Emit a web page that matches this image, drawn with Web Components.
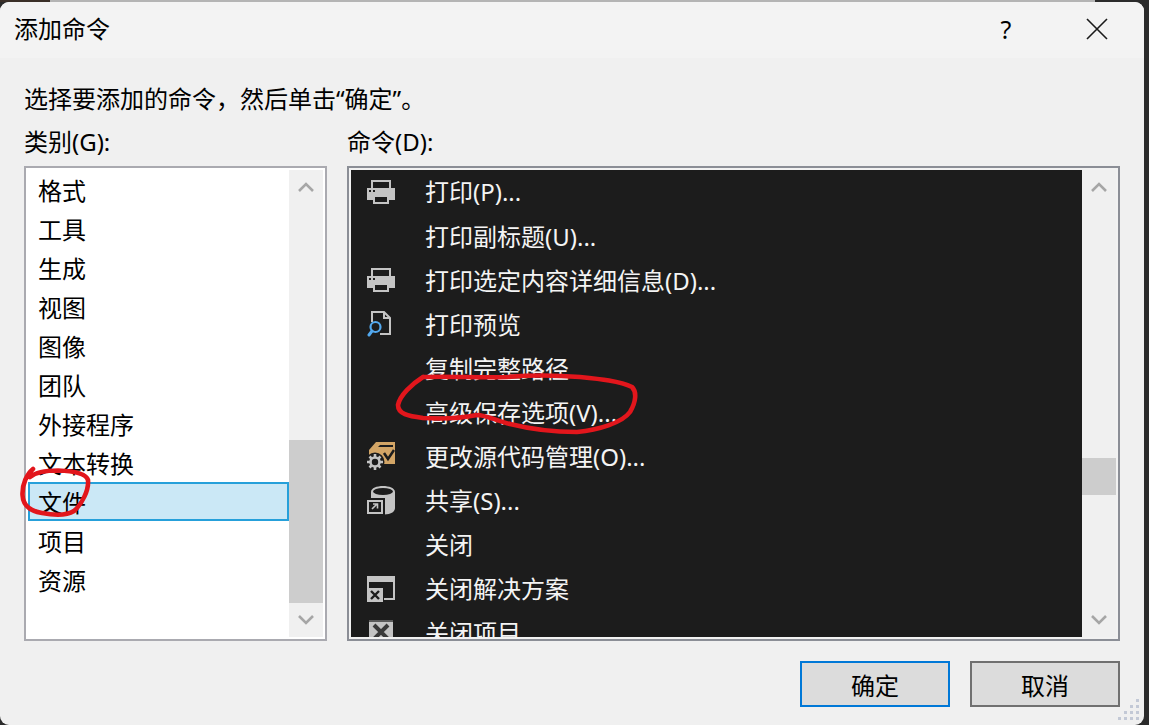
<!DOCTYPE html>
<html lang="zh">
<head>
<meta charset="utf-8">
<title>添加命令</title>
<style>
  html, body { margin: 0; height: 100%; overflow: hidden; }
  body {
    background: linear-gradient(90deg, #3a2f28 50px, #b4b4b4 50px 1095px, #2b2b2b 1095px) top / 100% 2px no-repeat, #2b2b2b;
    font: 24px/1.3 "Noto Sans", "Noto Sans CJK SC", sans-serif;
    color: #000;
  }
</style>
</head>
<body>
<cmd-dialog heading="添加命令">
  <span slot="prompt">选择要添加的命令，然后单击“确定”。</span>

  <div slot="left" class="col">
    <field-label>类别(G):</field-label>
    <list-box thumb-top="236" thumb-height="163">
      <cat-item>格式</cat-item>
      <cat-item>工具</cat-item>
      <cat-item>生成</cat-item>
      <cat-item>视图</cat-item>
      <cat-item>图像</cat-item>
      <cat-item>团队</cat-item>
      <cat-item>外接程序</cat-item>
      <cat-item>文本转换</cat-item>
      <cat-item selected>文件</cat-item>
      <cat-item>项目</cat-item>
      <cat-item>资源</cat-item>
    </list-box>
  </div>

  <div slot="right" class="col">
    <field-label>命令(D):</field-label>
    <list-box dark thumb-top="254" thumb-height="37">
      <cmd-item icon="printer">打印(P)...</cmd-item>
      <cmd-item>打印副标题(U)...</cmd-item>
      <cmd-item icon="printer">打印选定内容详细信息(D)...</cmd-item>
      <cmd-item icon="preview">打印预览</cmd-item>
      <cmd-item>复制完整路径</cmd-item>
      <cmd-item>高级保存选项(V)...</cmd-item>
      <cmd-item icon="source">更改源代码管理(O)...</cmd-item>
      <cmd-item icon="share">共享(S)...</cmd-item>
      <cmd-item>关闭</cmd-item>
      <cmd-item icon="closesln">关闭解决方案</cmd-item>
      <cmd-item icon="closeproj">关闭项目</cmd-item>
    </list-box>
  </div>

  <dlg-button slot="buttons" primary>确定</dlg-button>
  <dlg-button slot="buttons">取消</dlg-button>
</cmd-dialog>

<script>
const ICONS = {
  printer: `<svg width="28" height="24" viewBox="0 0 28 24">
    <path fill="#c4c4c4" d="M4 0h20v8h4v12h-6v4H6v-4H0V8h4z"/>
    <path fill="#1c1c1c" d="M6 2h16v6H6zM8 17h12v5H8zM2 10h2v2H2zM6 10h2v2H6z"/>
  </svg>`,
  preview: `<svg width="28" height="26" viewBox="0 0 28 26">
    <path fill="none" stroke="#c4c4c4" stroke-width="2" d="M5 11V1h12l6 6v16H13"/>
    <path fill="#c4c4c4" d="M16 1h2v5h5v2h-7z"/>
    <circle cx="8.500" cy="16" r="5" fill="#1c1c1c" stroke="#52a8ee" stroke-width="2.200"/>
    <path stroke="#52a8ee" stroke-width="3" stroke-linecap="round" d="M5 20l-3 4"/>
  </svg>`,
  source: `<svg width="28" height="30" viewBox="0 0 28 30">
    <path fill="#d3a566" d="M2 8l7-8h19v22H2z"/>
    <path fill="#1c1c1c" d="M11 5l2-2h13v2z"/>
    <path fill="none" stroke="#1c1c1c" stroke-width="2.500" d="M17 11l4 6 6-9"/>
    <circle cx="8" cy="20" r="9.500" fill="#1c1c1c"/>
    <circle cx="8" cy="20" r="4.500" fill="none" stroke="#c4c4c4" stroke-width="2.600"/>
    <path stroke="#c4c4c4" stroke-width="2.600" d="M8 12v3M8 25v3M0 20h3M13 20h3M2.500 14.500l2 2M11.500 23.500l2 2M13.500 14.500l-2 2M4.500 23.500l-2 2"/>
  </svg>`,
  share: `<svg width="28" height="30" viewBox="0 0 28 30">
    <path fill="#c4c4c4" d="M4 6c0-8 24-8 24 0v16c0 8-16 7-18 6V14H4z"/>
    <ellipse cx="16" cy="5.500" rx="10" ry="3.500" fill="#1c1c1c"/>
    <path fill="#1c1c1c" d="M0 12h18v18H0z"/>
    <path fill="#c4c4c4" d="M0 14h16v14H0z"/>
    <path fill="#1c1c1c" d="M2 16h12v10H2z"/>
    <path fill="none" stroke="#c4c4c4" stroke-width="1.600" d="M5 23l5-5M6 18h4.500v4.500"/>
  </svg>`,
  closesln: `<svg width="28" height="28" viewBox="0 0 28 28">
    <path fill="#c4c4c4" d="M0 1h28v24H17v-2h9V7H2v6H0z"/>
    <path fill="#c4c4c4" d="M0 13h16v14H0z"/>
    <path stroke="#1c1c1c" stroke-width="2.400" d="M4 16l8 8M12 16l-8 8"/>
  </svg>`,
  closeproj: `<svg width="24" height="26" viewBox="0 0 24 26">
    <path fill="#c4c4c4" d="M0 2h24v24H0z"/>
    <path fill="#5a5a5a" d="M0 0h24v2H0z"/>
    <path stroke="#3a3a3a" stroke-width="4" d="M5 5l14 14M19 5L5 19"/>
  </svg>`
};

class CmdDialog extends HTMLElement {
  constructor() {
    super();
    this.attachShadow({mode: 'open'});
  }
  connectedCallback() {
    this.shadowRoot.innerHTML = `
      <style>
        :host {
          display: flex;
          flex-direction: column;
          position: relative;
          width: 1144px;
          height: 723px;
          margin-top: 2px;
          box-sizing: border-box;
          background: #f0f0f0;
          border-radius: 9px;
          overflow: hidden;
        }
        .title {
          display: flex;
          align-items: center;
          height: 56px;
          flex: none;
          background: #f3f3f3;
          padding: 0 0 2px 14px;
          box-sizing: border-box;
        }
        .title span { flex: 1; }
        .help { width: 66px; text-align: center; font-size: 25px; margin-right: 25px; }
        .close { width: 66px; display: flex; justify-content: center; margin-right: 14px; }
        .body {
          flex: 1;
          display: flex;
          flex-direction: column;
          padding: 24px 24px 18px;
        }
        .prompt { height: 34px; line-height: 34px; }
        .lists {
          display: grid;
          grid-template-columns: 303px 773px;
          gap: 20px;
          margin-top: 10px;
        }
        .buttons {
          display: flex;
          justify-content: flex-end;
          gap: 20px;
          margin-top: 20px;
        }
        .marks {
          position: absolute;
          left: 0;
          top: -2px;
          pointer-events: none;
        }
        .grip { position: absolute; right: 2px; bottom: 2px; }
      </style>
      <div class="title">
        <span>${this.getAttribute('heading')}</span>
        <div class="help">?</div>
        <div class="close">
          <svg width="22" height="22" viewBox="0 0 22 22"><path stroke="#1a1a1a" stroke-width="1.6" d="M1 1l20 20M21 1L1 21"/></svg>
        </div>
      </div>
      <div class="body">
        <div class="prompt"><slot name="prompt"></slot></div>
        <div class="lists">
          <slot name="left"></slot>
          <slot name="right"></slot>
        </div>
        <div class="buttons"><slot name="buttons"></slot></div>
      </div>
      <svg class="grip" width="26" height="24" viewBox="0 0 26 24" fill="#c3c9d6">
        <path d="M20 0h3v3h-3zM14 6h3v3h-3zM20 6h3v3h-3zM8 12h3v3H8zM14 12h3v3h-3zM20 12h3v3h-3zM2 18h3v3H2zM8 18h3v3H8zM14 18h3v3h-3zM20 18h3v3h-3z"/>
      </svg>
      <svg class="marks" width="1144" height="725" viewBox="0 0 1144 725" fill="none" stroke="#e2161c" stroke-width="4.600" stroke-linecap="round" stroke-linejoin="round">
        <path d="M33 469C27 474 22 484 22.500 495C23 506 30 511 42 513C52 515 66 516 74 511C82 504 89 490 88 480C86 473 72 471 58 470.500C46 470.500 36 472 30 477"/>
        <path d="M423 377C412 384 400 395 398 405C398 414 408 416 423 418C440 419 462 418 477 415C486 415 497 421 510 424C530 429 555 432 577 432C598 430 622 423 630 412C636 402 637 392 632 387C620 381 600 379 580 377C555 375 530 375 507 377C480 378 450 376 423 377"/>
      </svg>
    `;
  }
}

class FieldLabel extends HTMLElement {
  constructor() {
    super();
    this.attachShadow({mode: 'open'});
    this.shadowRoot.innerHTML = `
      <style>
        :host { display: block; height: 32px; line-height: 32px; margin-bottom: 8px; }
      </style>
      <slot></slot>`;
  }
}

class ListBox extends HTMLElement {
  constructor() {
    super();
    this.attachShadow({mode: 'open'});
  }
  connectedCallback() {
    const dark = this.hasAttribute('dark');
    this.shadowRoot.innerHTML = `
      <style>
        :host {
          display: flex;
          height: 475px;
          box-sizing: border-box;
          border: 2px solid ${dark ? '#8b8e96' : '#aaaab0'};
          padding: 2px;
          background: ${dark ? '#f2f2f2' : '#fff'};
        }
        .items {
          flex: 1;
          min-width: 0;
          overflow: hidden;
          background: ${dark ? '#1c1c1c' : '#fff'};
          color: ${dark ? '#f4f4f4' : '#000'};
        }
        .bar {
          flex: none;
          width: 34px;
          display: flex;
          flex-direction: column;
          background: #f0f0f0;
        }
        .btn { height: 34px; flex: none; display: flex; align-items: center; justify-content: center; }
        .track { flex: 1; }
        .thumb {
          margin-top: ${this.getAttribute('thumb-top')}px;
          height: ${this.getAttribute('thumb-height')}px;
          background: #cdcdcd;
        }
      </style>
      <div class="items"><slot></slot></div>
      <div class="bar">
        <div class="btn"><svg width="16" height="10" viewBox="0 0 16 10"><path fill="none" stroke="#a6a6a6" stroke-width="2.600" d="M1 9l7-7 7 7"/></svg></div>
        <div class="track"><div class="thumb"></div></div>
        <div class="btn"><svg width="16" height="10" viewBox="0 0 16 10"><path fill="none" stroke="#a6a6a6" stroke-width="2.600" d="M1 1l7 7 7-7"/></svg></div>
      </div>`;
  }
}

class CatItem extends HTMLElement {
  constructor() {
    super();
    this.attachShadow({mode: 'open'});
    this.shadowRoot.innerHTML = `
      <style>
        :host {
          display: flex;
          align-items: center;
          height: 39px;
          box-sizing: border-box;
          padding: 2px 0 0 10px;
          border: 0 solid transparent;
        }
        :host([selected]) {
          background: #cbe8f6;
          border: 2px solid #26a0da;
          padding-left: 8px;
        }
      </style>
      <slot></slot>`;
  }
}

class CmdItem extends HTMLElement {
  constructor() {
    super();
    this.attachShadow({mode: 'open'});
  }
  connectedCallback() {
    const icon = ICONS[this.getAttribute('icon')] || '';
    this.shadowRoot.innerHTML = `
      <style>
        :host {
          display: flex;
          align-items: center;
          height: 44.1px;
          white-space: nowrap;
          padding-left: 16px;
        }
        .icon { width: 28px; height: 28px; margin-right: 30px; flex: none; display: flex; align-items: center; justify-content: center; }
      </style>
      <div class="icon">${icon}</div>
      <slot></slot>`;
  }
}

class DlgButton extends HTMLElement {
  constructor() {
    super();
    this.attachShadow({mode: 'open'});
    this.shadowRoot.innerHTML = `
      <style>
        :host {
          display: flex;
          align-items: center;
          justify-content: center;
          width: 150px;
          height: 46px;
          box-sizing: border-box;
          padding-top: 4px;
          background: #dcdcdc;
          border: 2px solid #707070;
        }
        :host([primary]) { border-color: #0078d7; }
      </style>
      <slot></slot>`;
  }
}

customElements.define('cmd-dialog', CmdDialog);
customElements.define('field-label', FieldLabel);
customElements.define('list-box', ListBox);
customElements.define('cat-item', CatItem);
customElements.define('cmd-item', CmdItem);
customElements.define('dlg-button', DlgButton);
</script>
</body>
</html>
